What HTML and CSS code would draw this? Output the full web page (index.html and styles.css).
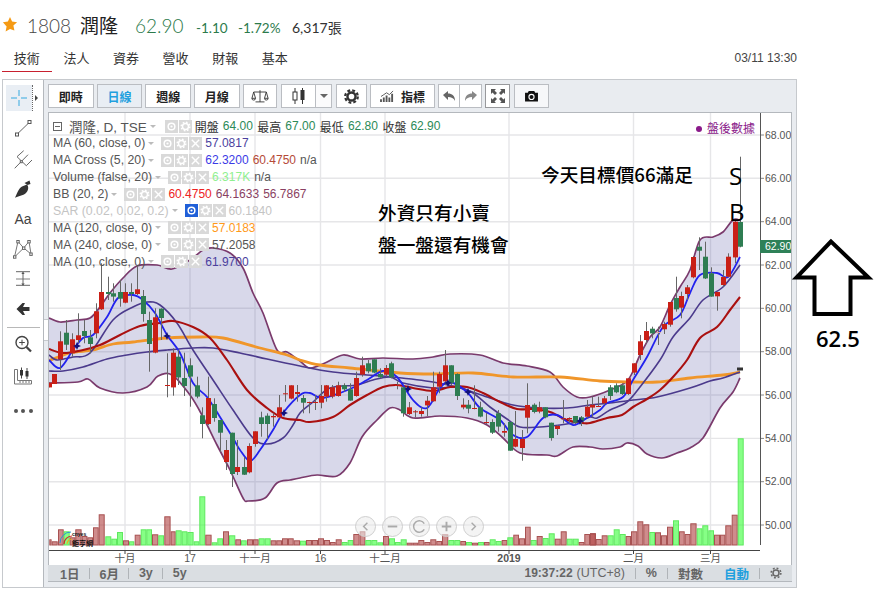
FILE: index.html
```html
<!DOCTYPE html>
<html lang="zh-Hant">
<head>
<meta charset="utf-8">
<title>1808 潤隆 技術線圖</title>
<link rel="stylesheet" href="styles.css">
</head>
<body>
<svg class="sprite" aria-hidden="true">
  <symbol id="i-eye" viewBox="0 0 14 14"><circle cx="7" cy="7" r="3.6" fill="none" stroke="#fff" stroke-width="1.6"/><circle cx="7" cy="7" r="1.2" fill="#fff"/></symbol>
  <symbol id="i-gear" viewBox="0 0 14 14"><circle cx="7" cy="7" r="3.2" fill="none" stroke="#fff" stroke-width="1.5"/><circle cx="7" cy="7" r="4.6" fill="none" stroke="#fff" stroke-width="1.6" stroke-dasharray="1.8 1.8"/></symbol>
  <symbol id="i-x" viewBox="0 0 14 14"><path d="M3 3l8 8M11 3l-8 8" stroke="#fff" stroke-width="1.5"/></symbol>
</svg>

<header class="quote">
  <svg class="star" viewBox="0 0 16 16"><path d="M8 1l2.1 4.6 5 .6-3.7 3.4 1 4.9L8 13.100 3.600 15.500l1-4.900L.9 6.200l5-.6z" fill="#f59a14"/></svg>
  <span class="code">1808</span>
  <span class="name">潤隆</span>
  <span class="price">62.90</span>
  <span class="chg">-1.10</span>
  <span class="chg chg-pct">-1.72%</span>
  <span class="vol">6,317張</span>
</header>

<nav class="tabs">
  <a class="tab tab-on">技術</a>
  <a class="tab">法人</a>
  <a class="tab">資券</a>
  <a class="tab">營收</a>
  <a class="tab">財報</a>
  <a class="tab">基本</a>
  <span class="stamp">03/11 13:30</span>
</nav>

<section class="frame">
  <aside class="tools">
    <div class="tool-top">
      <div class="cross"><svg viewBox="0 0 18 18" width="18" height="18"><path d="M9 1v6M9 11v6M1 9h6M11 9h6" stroke="#35a9e0" stroke-width="1"/></svg></div>
      <div class="cross-more"></div>
    </div>
    <div class="tool t-line"><svg viewBox="0 0 20 20" width="20" height="20"><path d="M4 15.300L16.700 3" stroke="#666"/><rect x="2.500" y="14" width="3" height="3" fill="#fff" stroke="#555"/><rect x="15" y="1.500" width="3" height="3" fill="#fff" stroke="#555"/></svg></div>
    <div class="tool"><svg viewBox="0 0 20 20" width="20" height="20" fill="none" stroke="#666"><path d="M1.700 19.300L15 5.700M4 7.700l9.300 9M4 7.700l6.700-6M13.300 16.700L19 11"/><rect x="7.300" y="11.700" width="2" height="2" fill="#fff"/></svg></div>
    <div class="tool"><svg viewBox="0 0 20 20" width="20" height="20"><path d="M2 18.700C4 15 5 10 9 7.500l5-2c2 2.500 1.500 6-1 8.500-3 3-8 3-11 4.700z" fill="#333"/><path d="M11.500 4l5-2.500 1 3.500-3 1z" fill="#333"/></svg></div>
    <div class="tool t-aa">Aa</div>
    <div class="tool"><svg viewBox="0 0 20 20" width="20" height="20" fill="none" stroke="#666"><path d="M1.500 18L5 2.500 10.700 9 16 2.500 18 15l-7.300-6L1.500 18" stroke-width=".9"/><rect x="3.800" y="1.500" width="2.400" height="2.400" fill="#fff"/><rect x="14.800" y="1.500" width="2.400" height="2.400" fill="#fff"/><rect x="9.500" y="8" width="2.400" height="2.400" fill="#fff"/><rect x=".5" y="16.800" width="2.400" height="2.400" fill="#fff"/><rect x="16.800" y="14" width="2.400" height="2.400" fill="#fff"/></svg></div>
    <div class="tool"><svg viewBox="0 0 20 20" width="20" height="20" fill="none"><path d="M3 2.700h14M3 16.300h14" stroke="#666"/><path d="M3 10h14" stroke="#aaa" stroke-width="1.500"/><path d="M10 3v13.500" stroke="#666"/><path d="M8.300 5l1.700-2 1.700 2zM8.300 14.500l1.700 2 1.700-2z" fill="#555"/></svg></div>
    <div class="tool"><svg viewBox="0 0 18 18" width="18" height="18"><path d="M2.500 9l6-6H11L9 7h6.500v4H9l2 4H8.500z" fill="#333"/></svg></div>
    <div class="tool-sep"></div>
    <div class="tool"><svg viewBox="0 0 20 20" width="20" height="20" fill="none" stroke="#444"><circle cx="9" cy="8.500" r="6" stroke-width="1.400"/><path d="M13.500 13l4.500 4.500" stroke-width="2.300"/><path d="M6.200 8.500h5.600M9 5.700v5.600"/></svg></div>
    <div class="tool t-ruler"><svg viewBox="0 0 20 20" width="20" height="20" fill="none"><path d="M1.500 3.500V18h17v-3.500H4.500V3.500z" stroke="#777"/><path d="M7 15v2M10 15v2M13 15v2M16 15v2" stroke="#777"/><path d="M8.500 1.500v11M14 2v11" stroke="#444"/><rect x="7" y="4" width="3" height="5.500" fill="#333"/><rect x="12.500" y="5" width="3" height="5.500" fill="#333"/></svg></div>
    <div class="tool t-dots"><i></i><i></i><i></i></div>
  </aside>

  <div class="workspace">
    <div class="toolbar">
      <button class="btn b-word">即時</button>
      <button class="btn b-word b-on">日線</button>
      <button class="btn b-word">週線</button>
      <button class="btn b-word">月線</button>
      <button class="btn b-scale"><svg viewBox="0 0 20 16" width="18" height="15" fill="none" stroke="#333"><path d="M10 1v13M5 14h10M3 3h14M3 3L1 10M3 3l2 7M17 3l-2 7M17 3l2 7M1 10a2 2 0 0 0 4 0zM15 10a2 2 0 0 0 4 0z"/></svg></button>
      <button class="btn b-candle"><svg viewBox="0 0 16 18" width="16" height="18"><path d="M4 1v16M11.500 1v16" stroke="#333"/><rect x="2" y="5" width="4" height="8" fill="#fff" stroke="#333"/><rect x="9.500" y="3" width="4" height="10" fill="#333"/></svg></button>
      <button class="btn b-caret"><i class="caret"></i></button>
      <button class="btn b-gear"><svg viewBox="0 0 16 16" width="15" height="15"><circle cx="8" cy="8" r="4.300" fill="none" stroke="#333" stroke-width="2.600"/><circle cx="8" cy="8" r="6.700" fill="none" stroke="#333" stroke-width="2.400" stroke-dasharray="3 2.260"/></svg></button>
      <button class="btn b-ind"><svg viewBox="0 0 16 14" width="15" height="13"><path d="M1 13v-3M4 13V8M7 13V6M10 13V8M13 13V4" stroke="#555" stroke-width="2"/><path d="M1 7l3-2 3-2 3 2 4-4" stroke="#555" fill="none"/></svg><span>指標</span></button>
      <div class="pair">
        <button class="btn b-undo"><svg viewBox="0 0 14 12" width="14" height="12"><path d="M1 5l5-4v2.500c4 0 7 2 7 7.500-1.500-3-3.500-4-7-4V10z" fill="#666"/></svg></button>
        <button class="btn b-undo b-redo"><svg viewBox="0 0 14 12" width="14" height="12"><path d="M13 5L8 1v2.500c-4 0-7 2-7 7.500 1.500-3 3.500-4 7-4V10z" fill="#888"/></svg></button>
      </div>
      <button class="btn b-full"><svg viewBox="0 0 16 16" width="16" height="16" fill="#555"><path d="M1 1h5L4.500 2.500 7 5 5 7 2.500 4.500 1 6zM15 1v5l-1.500-1.500L11 7 9 5l2.500-2.500L10 1zM1 15v-5l1.500 1.500L5 9l2 2-2.500 2.500L6 15zM15 15h-5l1.500-1.500L9 11l2-2 2.500 2.500L15 10z"/></svg></button>
      <button class="btn b-cam"><svg viewBox="0 0 16 13" width="15" height="12"><path d="M1 3h3l1-2h6l1 2h3v9.500H1z" fill="#111"/><circle cx="8" cy="7.500" r="2.800" fill="#111" stroke="#fff" stroke-width="1.200"/></svg></button>
    </div>

    <div class="chart">
      <svg id="plot" class="plot" viewBox="48 112 743 453" xmlns="http://www.w3.org/2000/svg">
        <g id="grid"></g>
        <g id="band"></g>
        <g id="vols"></g>
        <g id="lines"></g>
        <g id="candles"></g>
        <g id="axes"></g>
        <g class="logo">
          <path d="M60 543a11 11 0 0 1 11-11" fill="none" stroke="#2a9ad0" stroke-width="1"/>
          <path d="M64 544a8 8 0 0 1 8-8" fill="none" stroke="#d02a2a" stroke-width="1.200"/>
          <path d="M67 544a5 5 0 0 1 5-5" fill="none" stroke="#e8b020" stroke-width="1.200"/>
          <text class="logo-en" x="72" y="535.500">cnyes</text>
          <text class="logo-zh" x="72" y="546">鉅亨網</text>
        </g>
      </svg>

      <div class="legend">
        <div class="row row-main">
          <i class="fold"></i><span class="lbl">潤隆, D, TSE</span><i class="dd"></i>
          <span class="acts acts-two"><b class="act"><svg><use href="#i-eye"/></svg></b><b class="act"><svg><use href="#i-gear"/></svg></b></span>
          <span class="ohlc">開盤</span><span class="up">64.00</span><span class="ohlc">最高</span><span class="up">67.00</span><span class="ohlc">最低</span><span class="up">62.80</span><span class="ohlc">收盤</span><span class="up">62.90</span>
        </div>
        <div class="row"><span class="lbl">MA (60, close, 0)</span><i class="dd"></i><span class="acts"><b class="act"><svg><use href="#i-eye"/></svg></b><b class="act"><svg><use href="#i-gear"/></svg></b><b class="act"><svg><use href="#i-x"/></svg></b></span><span class="v c-ind">57.0817</span></div>
        <div class="row"><span class="lbl">MA Cross (5, 20)</span><i class="dd"></i><span class="acts"><b class="act"><svg><use href="#i-eye"/></svg></b><b class="act"><svg><use href="#i-gear"/></svg></b><b class="act"><svg><use href="#i-x"/></svg></b></span><span class="v c-blue">62.3200</span><span class="v c-brn">60.4750</span><span class="v c-na">n/a</span></div>
        <div class="row"><span class="lbl">Volume (false, 20)</span><i class="dd"></i><span class="acts"><b class="act"><svg><use href="#i-eye"/></svg></b><b class="act"><svg><use href="#i-gear"/></svg></b><b class="act"><svg><use href="#i-x"/></svg></b></span><span class="v c-lime">6.317K</span><span class="v c-na">n/a</span></div>
        <div class="row"><span class="lbl">BB (20, 2)</span><i class="dd"></i><span class="acts"><b class="act"><svg><use href="#i-eye"/></svg></b><b class="act"><svg><use href="#i-gear"/></svg></b><b class="act"><svg><use href="#i-x"/></svg></b></span><span class="v c-red">60.4750</span><span class="v c-bb">64.1633</span><span class="v c-bb">56.7867</span></div>
        <div class="row row-off"><span class="lbl">SAR (0.02, 0.02, 0.2)</span><i class="dd"></i><span class="acts"><b class="act act-on"><svg><use href="#i-eye"/></svg></b><b class="act"><svg><use href="#i-gear"/></svg></b><b class="act"><svg><use href="#i-x"/></svg></b></span><span class="v">60.1840</span></div>
        <div class="row"><span class="lbl">MA (120, close, 0)</span><i class="dd"></i><span class="acts"><b class="act"><svg><use href="#i-eye"/></svg></b><b class="act"><svg><use href="#i-gear"/></svg></b><b class="act"><svg><use href="#i-x"/></svg></b></span><span class="v c-org">57.0183</span></div>
        <div class="row"><span class="lbl">MA (240, close, 0)</span><i class="dd"></i><span class="acts"><b class="act"><svg><use href="#i-eye"/></svg></b><b class="act"><svg><use href="#i-gear"/></svg></b><b class="act"><svg><use href="#i-x"/></svg></b></span><span class="v c-na">57.2058</span></div>
        <div class="row"><span class="lbl">MA (10, close, 0)</span><i class="dd"></i><span class="acts"><b class="act"><svg><use href="#i-eye"/></svg></b><b class="act"><svg><use href="#i-gear"/></svg></b><b class="act"><svg><use href="#i-x"/></svg></b></span><span class="v c-ind">61.9700</span></div>
      </div>

      <div class="after"><i class="dot"></i>盤後數據</div>

      <div class="nav">
        <span class="nv"><svg viewBox="0 0 20 20"><path d="M12 6l-4 4 4 4" fill="none" stroke="#aaa" stroke-width="1.500"/></svg></span>
        <span class="nv"><svg viewBox="0 0 20 20"><path d="M5 10h10" stroke="#aaa" stroke-width="2"/></svg></span>
        <span class="nv"><svg viewBox="0 0 20 20"><path d="M15 7a6 6 0 1 0 0 6" fill="none" stroke="#aaa" stroke-width="1.500"/></svg></span>
        <span class="nv"><svg viewBox="0 0 20 20"><path d="M5 10h10M10 5v10" stroke="#aaa" stroke-width="2"/></svg></span>
        <span class="nv"><svg viewBox="0 0 20 20"><path d="M8 6l4 4-4 4" fill="none" stroke="#aaa" stroke-width="1.500"/></svg></span>
      </div>

      <div class="note note-a">今天目標價66滿足</div>
      <div class="note note-b">外資只有小賣</div>
      <div class="note note-c">盤一盤還有機會</div>
      <div class="mark mark-s">S</div>
      <div class="mark mark-b">B</div>
    </div>

    <footer class="range">
      <div class="range-l">
        <span>1日</span><i class="div"></i><span>6月</span><i class="div"></i><span>3y</span><i class="div"></i><span>5y</span>
      </div>
      <div class="range-r">
        <strong class="clock">19:37:22</strong><span class="tz">(UTC+8)</span><i class="div"></i><span>%</span><i class="div"></i><span>對數</span><span class="auto">自動</span><i class="div"></i>
        <svg class="cog" viewBox="0 0 16 16" width="12" height="12"><circle cx="8" cy="8" r="4" fill="none" stroke="#666" stroke-width="2"/><circle cx="8" cy="8" r="6.500" fill="none" stroke="#666" stroke-width="2" stroke-dasharray="2.500 2.600"/></svg>
      </div>
    </footer>
  </div>

  <svg class="big-arrow" viewBox="0 0 80 84"><path d="M37 3.500L2.500 39.500h18v36.500h36V39.500h18z" fill="#fff" stroke="#000" stroke-width="4"/></svg>
  <div class="target">62.5</div>
</section>
<script src="chart.js"></script>
</body>
</html>
```
FILE: styles.css
```css
* { box-sizing: border-box; }
html, body { margin: 0; padding: 0; background: #fff; }
body {
  width: 890px; height: 594px; overflow: hidden; position: relative;
  font-family: "Liberation Sans", "Noto Sans CJK TC", sans-serif;
  color: #333;
}
.sprite { position: absolute; width: 0; height: 0; }

/* quote line */
.quote { display: flex; align-items: baseline; height: 45px; padding: 14px 0 0 2px; }
.star { width: 16px; height: 16px; align-self: flex-start; margin: 2px 9px 0 0; }
.code { font: 300 19px Lato, "Liberation Sans", sans-serif; color: #444; width: 53px; }
.name { font: 400 19px "Noto Sans CJK TC", sans-serif; color: #222; width: 55px; line-height: 20px; }
.price { font: 300 19px Lato, "Liberation Sans", sans-serif; color: #2c7a4b; width: 61px; }
.chg { font: 400 13.500px Lato, "Liberation Sans", sans-serif; color: #2c7a4b; width: 42px; }
.chg-pct { width: 54px; }
.vol { font: 400 14px Lato, "Noto Sans CJK TC", sans-serif; color: #333; }

/* tabs */
.tabs { display: flex; align-items: flex-start; height: 27px; padding-left: 2px; position: relative; }
.tab { width: 49.600px; height: 27px; text-align: center; font-size: 13px; line-height: 27px; color: #333; }
.tab-on { border-bottom: 1px solid #c8202f; }
.stamp { margin-left: auto; margin-right: 93px; font-size: 12px; line-height: 27px; color: #444; }

/* frame */
.frame {
  position: absolute; left: 2px; top: 79px; width: 795px; height: 509px;
  display: flex; border: 1px solid #c6c9cd; background: #e9ecf0;
}
.tools { width: 41px; background: #fff; border-right: 1px solid #b4b8bd; display: flex; flex-direction: column; align-items: center; }
.tool-top { display: flex; width: 34px; height: 26px; margin: 5px 0 1px 0; background: #e9eef4; }
.cross { width: 26px; display: flex; align-items: center; justify-content: center; }
.cross-more { width: 8px; background: #fff; border-left: 1px dotted #666; position: relative; }
.cross-more::after { content: ""; position: absolute; left: 2px; top: 10px; border-left: 3px solid #444; border-top: 3px solid transparent; border-bottom: 3px solid transparent; }
.tool { width: 26px; height: 30px; display: flex; align-items: center; justify-content: center; }
.t-line { margin-top: 2px; }
.t-aa { font-size: 14px; color: #444; }
.tool-sep { width: 33px; height: 1px; background: #b8b8b8; margin: 3px 0 1px; }
.t-ruler { margin-top: 2px; }
.t-dots { gap: 3.500px; margin-top: 5px; }
.t-dots i { width: 4px; height: 4px; border-radius: 50%; background: #555; }

.workspace { width: 752px; padding-left: 4px; display: flex; flex-direction: column; position: relative; }
.workspace::before {
  content: ""; position: absolute; left: 0; top: 239px; width: 4px; height: 20px;
  background: #fff; border: 1px solid #c6c9cd; border-left: 0; border-right: 0;
}
.toolbar { height: 32px; display: flex; gap: 3px; padding: 4px 0 0 0; }
.btn {
  height: 24px; padding: 0; border: 1px solid #babdc2; background: #fff; color: #222;
  font: 700 12px "Noto Sans CJK TC", sans-serif; display: flex; align-items: center; justify-content: center;
}
.b-word { width: 45.670px; }
.b-on { background: #e9eef4; color: #1fa0de; }
.b-scale { width: 34.500px; }
.b-candle { width: 34px; border-right: 0; margin: 0 -3px 0 1px; }
.b-caret { width: 17px; background: #fbfbfc; }
.caret { border-top: 4px solid #666; border-left: 4px solid transparent; border-right: 4px solid transparent; }
.b-gear { width: 31px; margin-left: 1px; }
.b-ind { width: 65px; gap: 6px; }
.pair { display: flex; }
.b-undo { width: 22px; background: #fff; }
.b-redo { border-left: 0; }
.b-full { width: 25px; border-color: #98999c; }
.b-cam { width: 35px; background: #f6f7f9; margin-left: 1px; }

.chart {
  position: relative; width: 744px; height: 453px; background: #fff;
  border: 1px solid #b4b8bd; border-bottom: 0; overflow: hidden;
}
.plot { position: absolute; left: -1px; top: -1px; width: 743px; height: 453px; display: block; }
.gl { stroke: #e6e6e8; stroke-width: 1.400; }
.logo-en { font: 700 5px "Liberation Sans", sans-serif; fill: #111; }
.logo-zh { font: 700 7px "Noto Sans CJK TC", sans-serif; fill: #111; }
.ax-y { font: 10.500px "Liberation Sans", sans-serif; fill: #555; }
.ax-x { font: 10.500px "Liberation Sans", "Noto Sans CJK TC", sans-serif; fill: #555; text-anchor: middle; }
.ax-b { font-weight: 700; }
.tag { font: 10.500px "Liberation Sans", sans-serif; fill: #fff; }

.legend { position: absolute; left: 4px; top: 5px; font-size: 12px; }
.row { display: flex; align-items: center; height: 16.900px; white-space: nowrap; color: #555; }
.lbl { font-size: 12.300px; }
.row-main .lbl { font-size: 13.500px; margin-left: 7px; }
.fold { width: 9px; height: 9px; border: 1px solid #666; position: relative; }
.fold::after { content: ""; position: absolute; left: 1px; right: 1px; top: 3px; height: 1px; background: #666; }
.dd { width: 0; height: 0; margin-left: 3px; border-top: 3px solid #bbb; border-left: 3.500px solid transparent; border-right: 3.500px solid transparent; }
.acts { display: flex; gap: 1px; margin: 0 3px 0 7px; }
.acts-two { margin-left: 9px; }
.act { width: 13px; height: 13px; background: #d9d9d9; display: block; }
.act svg { width: 13px; height: 13px; display: block; }
.act-on { background: #1f5fd8; }
.ohlc { color: #333; margin-right: 4px; }
.up { color: #2c8a57; margin-right: 4.500px; }
.v { margin-right: 4px; }
.c-ind { color: #4b3f9e; }
.c-blue { color: #3b3be6; }
.c-brn { color: #b54a38; }
.c-na { color: #555; }
.c-lime { color: #8ff08f; }
.c-red { color: #ee2222; }
.c-bb { color: #8a3f62; }
.c-org { color: #ff9a1a; }
.row-off, .row-off .v { color: #c4c4c4; }

.after { position: absolute; right: 36px; top: 9px; font-size: 12px; line-height: 14px; color: #8a1a8a; display: flex; align-items: center; gap: 5px; }
.dot { width: 6px; height: 6px; border-radius: 50%; background: #8a1a8a; }

.nav { position: absolute; left: 306px; top: 403px; display: flex; gap: 6px; }
.nv { width: 21px; height: 21px; border-radius: 50%; border: 1px solid #cfcfcf; background: rgba(235, 235, 235, .55); display: block; }
.nv svg { display: block; width: 19px; height: 19px; }

.note { position: absolute; font: 500 18.670px/24px "Noto Sans CJK TC", sans-serif; color: #000; white-space: nowrap; }
.note-a { left: 492px; top: 49px; }
.note-b { left: 329px; top: 87px; }
.note-c { left: 329px; top: 119px; }
.mark { position: absolute; font: 400 24px/28px "Open Sans", sans-serif; color: #000; }
.mark-s { left: 680px; top: 49px; }
.mark-b { left: 680px; top: 85px; }

.range {
  width: 744px; height: 17px; background: #dadee2; border-bottom: 1px solid #b4b8bd;
  display: flex; justify-content: space-between; align-items: center; font-weight: 700; font-size: 12.500px; color: #666;
}
.range-l, .range-r { display: flex; align-items: center; gap: 10px; }
.range-l { padding-left: 12px; gap: 9.500px; }
.range-r { padding-right: 10px; }
.div { width: 1px; height: 11px; background: #b0b4b8; }
.clock { margin-right: -6px; font-size: 12px; }
.tz { font-weight: 400; }
.auto { color: #1fa0de; margin-left: 11px; }

.big-arrow { position: absolute; left: 791px; top: 158px; width: 80px; height: 84px; overflow: visible; }
.target { position: absolute; left: 813px; top: 246px; font: 600 22px/24px "Open Sans", sans-serif; color: #000; }
```
FILE: chart.js
```js
(function () {
  var NS = 'http://www.w3.org/2000/svg';
  function el(parent, name, attrs, text) {
    var n = document.createElementNS(NS, name);
    for (var k in attrs) n.setAttribute(k, attrs[k]);
    if (text) n.textContent = text;
    document.getElementById(parent).appendChild(n);
    return n;
  }
  function smooth(p, first) {
    var d = first ? 'M' + p[0][0] + ' ' + p[0][1] : 'L' + p[0][0] + ' ' + p[0][1];
    for (var i = 0; i < p.length - 1; i++) {
      var a = p[i - 1] || p[i], b = p[i], c = p[i + 1], e = p[i + 2] || c;
      d += 'C' + (b[0] + (c[0] - a[0]) / 6).toFixed(1) + ' ' + (b[1] + (c[1] - a[1]) / 6).toFixed(1) + ' ' +
        (c[0] - (e[0] - b[0]) / 6).toFixed(1) + ' ' + (c[1] - (e[1] - b[1]) / 6).toFixed(1) + ' ' + c[0] + ' ' + c[1];
    }
    return d;
  }

  /* grid */
  var hy = [135, 178.3, 221.7, 265, 308.3, 351.7, 395, 438.4, 481.7, 525];
  var vx = [125, 190, 255, 320.5, 385, 509, 633.5, 710.5];
  hy.forEach(function (y) { el('grid', 'line', { x1: 48, x2: 760, y1: y, y2: y, 'class': 'gl' }); });
  vx.forEach(function (x) { el('grid', 'line', { x1: x, x2: x, y1: 112, y2: 550, 'class': 'gl' }); });

  /* Bollinger band */
  var up = [[49,318],[60,322],[77,320],[90,318],[100,307],[110,293],[123,278],[137,266],[157,265],[172,269],[190,260],[203,250],[213,248],[230,253],[243,268],[253,293],[263,313],[277,350],[287,352],[300,361],[310,368],[325,363],[343,355],[360,359],[383,358],[413,359],[433,357],[450,354],[480,355],[503,363],[527,366],[550,372],[563,387],[577,397],[590,397],[610,390],[628,380],[640,355],[650,337],[660,327],[670,305],[680,287],[690,270],[700,240],[713,237],[723,232],[733,220],[740,220]];
  var lo = [[49,383],[78,382],[88,379],[100,388],[123,393],[147,387],[158,376],[172,375],[190,395],[203,417],[217,445],[230,470],[243,498],[248,501],[265,498],[277,483],[290,480],[300,478],[317,475],[337,476],[350,463],[362,437],[377,420],[390,408],[400,410],[413,418],[440,416],[467,418],[487,425],[503,438],[520,453],[547,455],[557,456],[573,447],[590,447],[603,449],[620,447],[627,443],[638,446],[647,454],[662,458],[677,453],[690,448],[703,438],[720,408],[733,392],[740,378]];
  var band = smooth(up, true) + smooth(lo.slice().reverse(), false) + 'Z';
  el('band', 'path', { d: band, fill: 'rgba(88,88,165,.23)' });

  /* volume: [left, right, top] in 3x crop coordinates */
  var V = [
    { ox: 0, oy: 430, base: 345, b: [[148,155,328,'r'],[155,173,334,'r'],[174,191,298,'r'],[191,209,304,'g'],[209,226,322,'r'],[226,245,298,'r'],[245,262,318,'r'],[262,279,322,'r'],[279,296,292,'r'],[296,314,253,'r'],[316,334,319,'g'],[334,351,326,'g'],[351,369,306,'g'],[369,387,331,'r'],[387,403,334,'g'],[404,422,314,'r'],[422,439,298,'g'],[439,456,298,'g'],[456,475,313,'r'],[475,492,316,'g'],[493,512,259,'r'],[512,527,304,'r'],[527,545,301,'g'],[545,562,304,'g'],[562,581,306,'g'],[581,598,334,'g'],[598,616,199,'g'],[616,635,314,'r'],[635,652,337,'g'],[652,669,325,'g'],[669,687,304,'r'],[687,706,316,'g'],[706,723,328,'r'],[723,740,331,'g'],[741,759,328,'r'],[759,776,328,'r'],[776,794,325,'g'],[794,812,325,'g'],[812,829,331,'r'],[829,846,331,'r'],[846,864,325,'r'],[864,881,325,'r'],[881,900,331,'r']] },
    { ox: 300, oy: 330, base: 645, b: [[0,18,632,'g'],[18,36,630,'r'],[36,54,630,'r'],[54,72,625,'r'],[72,90,630,'r'],[90,107,636,'r'],[107,125,628,'r'],[125,143,636,'g'],[143,160,630,'g'],[160,179,612,'r'],[179,196,604,'r'],[196,214,630,'g'],[214,232,630,'g'],[232,249,637,'g'],[249,267,618,'r'],[267,285,625,'g'],[285,302,636,'g'],[302,320,628,'g'],[320,338,638,'r'],[338,355,638,'r'],[355,373,630,'r'],[373,391,636,'r'],[391,409,628,'r'],[409,426,633,'r'],[426,445,613,'r'],[445,463,630,'g'],[463,481,630,'g'],[481,498,633,'r'],[498,516,636,'g'],[516,534,638,'r'],[534,552,636,'g'],[552,569,636,'r'],[569,587,628,'g'],[587,605,633,'g'],[605,622,630,'r'],[622,640,622,'g'],[640,657,614,'r'],[657,675,625,'r'],[675,692,590,'r'],[692,710,630,'g'],[710,728,618,'r'],[728,746,624,'g'],[746,764,610,'g'],[764,782,626,'r'],[782,800,604,'r'],[800,818,626,'g'],[818,836,626,'g'],[836,853,636,'r'],[853,870,612,'r'],[870,888,610,'r']] },
    { ox: 590, oy: 350, base: 585, b: [[0,17,550,'r'],[17,35,567,'r'],[35,53,556,'r'],[53,71,556,'g'],[71,89,538,'g'],[89,107,552,'g'],[107,123,558,'r'],[123,142,544,'r'],[142,160,514,'r'],[160,178,523,'r'],[178,195,546,'g'],[195,213,547,'r'],[213,231,556,'r'],[231,249,530,'r'],[249,267,511,'g'],[267,284,544,'r'],[284,301,552,'r'],[301,320,520,'r'],[320,337,535,'g'],[337,355,526,'g'],[355,372,541,'g'],[372,390,554,'r'],[390,406,554,'r'],[406,425,526,'r'],[425,443,494,'r'],[443,461,265,'g']] }
  ];
  V.forEach(function (s) {
    s.b.forEach(function (b) {
      var r = b[3] === 'r';
      el('vols', 'rect', {
        x: (s.ox + b[0] / 3 + .5).toFixed(1), y: (s.oy + b[2] / 3 + .5).toFixed(1),
        width: ((b[1] - b[0]) / 3 - 1).toFixed(1), height: ((s.base - b[2]) / 3 - .5).toFixed(1),
        fill: r ? 'rgba(178,70,70,.62)' : 'rgba(60,255,60,.62)', stroke: r ? '#a85252' : '#5fe85f', 'stroke-width': 1
      });
    });
  });

  /* moving averages */
  var L = [
    { c: '#f0962a', w: 2.8, p: [[48,361],[70,353],[93,350],[113,344],[133,342],[167,338],[200,337],[223,338],[260,348],[287,355],[300,360],[320,365],[350,368],[400,373],[433,374],[473,373],[513,377],[560,377],[600,381],[633,382],[657,382],[690,378],[723,375],[740,372]] },
    { c: '#4b3a8c', w: 1.6, p: [[49,371],[63,371],[83,367],[107,359],[127,355],[147,352],[167,350],[193,348],[213,348],[240,353],[267,359],[300,366],[333,372],[367,375],[393,377],[433,382],[460,388],[490,398],[513,405],[540,408],[567,408],[590,405],[610,403],[633,400],[657,397],[690,388],[710,381],[723,378],[740,372]] },
    { c: '#4b3a8c', w: 1.6, p: [[49,355],[57,360],[73,357],[90,353],[113,320],[133,307],[147,302],[160,305],[177,323],[193,350],[213,380],[233,410],[253,438],[267,444],[283,438],[293,425],[300,413],[313,402],[330,388],[357,385],[373,380],[390,377],[403,383],[433,388],[457,387],[473,393],[490,407],[507,419],[520,427],[540,427],[560,425],[577,422],[590,417],[597,418],[610,410],[627,402],[640,387],[660,360],[673,337],[690,318],[703,300],[723,287],[740,265]] },
    { c: '#aa1010', w: 2.1, p: [[49,349],[63,353],[83,350],[100,345],[120,335],[140,326],[160,323],[173,321],[193,327],[210,338],[227,360],[247,390],[267,408],[283,418],[300,420],[310,422],[333,417],[350,405],[367,395],[383,387],[397,385],[413,388],[433,391],[450,387],[467,387],[483,393],[500,402],[517,409],[533,409],[550,412],[567,420],[583,423],[590,423],[607,418],[622,415],[633,407],[647,399],[660,390],[673,377],[687,360],[700,338],[717,327],[730,310],[740,297]] },
    { c: '#2222ee', w: 1.8, p: [[49,360],[60,368],[73,350],[83,338],[93,335],[107,317],[118,298],[133,295],[143,300],[155,313],[167,335],[180,353],[193,383],[207,397],[220,417],[233,438],[240,450],[250,461],[260,450],[273,430],[283,413],[300,395],[310,393],[323,398],[350,389],[367,380],[383,371],[397,377],[413,400],[427,408],[440,388],[450,382],[467,392],[480,408],[500,420],[513,435],[527,437],[543,418],[557,415],[573,425],[587,418],[600,410],[607,403],[623,397],[633,380],[647,357],[663,327],[680,315],[690,293],[700,275],[717,273],[728,277],[740,257]] }
  ];
  el('lines', 'path', { d: smooth(up, true), fill: 'none', stroke: '#7a3a6c', 'stroke-width': 1.7 });
  el('lines', 'path', { d: smooth(lo, true), fill: 'none', stroke: '#7a3a6c', 'stroke-width': 1.7 });
  L.forEach(function (l) {
    el('lines', 'path', { d: smooth(l.p, true), fill: 'none', stroke: l.c, 'stroke-width': l.w });
  });

  /* candles: [x, wickTop, wickBottom, bodyTop, bodyBottom, colour] in crop coordinates */
  var C = [
    { ox: 0, oy: 270, c: [[148,338,352,338,352,'r'],[162,312,342,312,342,'r'],[181,184,300,214,268,'r'],[198,150,240,188,224,'g'],[216,190,260,208,250,'r'],[234,130,220,196,210,'r'],[252,150,220,183,198,'g'],[270,180,250,202,222,'g'],[288,100,205,124,190,'r'],[304,-20,120,66,118,'r'],[323,20,90,66,72,'g'],[340,40,95,70,80,'g'],[359,30,110,66,86,'g'],[376,40,100,66,98,'r'],[393,40,95,66,72,'g'],[411,-15,75,58,72,'r'],[429,60,155,78,132,'g'],[446,125,305,150,222,'g'],[465,115,250,142,248,'r'],[482,115,210,116,144,'g'],[501,250,382,345,347,'r'],[518,235,377,248,352,'r'],[535,240,345,260,322,'g'],[553,248,378,324,348,'g'],[570,265,410,286,320,'g'],[590,320,385,346,380,'g'],[606,412,505,436,462,'g'],[624,320,465,384,462,'r'],[642,385,455,402,444,'g'],[660,450,546,450,488,'g'],[677,510,600,540,576,'r'],[695,488,651,488,612,'g'],[712,510,615,591,606,'r'],[731,561,615,591,614,'g'],[748,520,610,528,607,'r'],[765,484,530,484,522,'r'],[784,425,500,442,462,'g'],[801,430,508,437,462,'g'],[818,430,470,438,442,'r'],[836,375,445,412,442,'r'],[854,345,395,370,372,'r'],[873,346,388,346,386,'r'],[890,345,395,366,372,'r']] },
    { ox: 300, oy: 330, c: [[8,195,250,204,218,'g'],[26,215,250,216,218,'r'],[44,195,240,216,218,'r'],[63,165,235,198,218,'r'],[79,165,215,166,200,'r'],[96,165,205,172,200,'r'],[115,155,200,166,198,'r'],[132,160,185,166,178,'g'],[151,160,212,178,212,'g'],[168,125,200,144,198,'r'],[185,80,140,106,134,'r'],[204,90,130,100,124,'g'],[221,88,130,88,128,'g'],[239,115,145,132,142,'g'],[257,105,140,114,134,'r'],[274,95,145,100,142,'g'],[292,155,178,165,167,'r'],[310,170,260,172,250,'g'],[327,216,255,232,252,'r'],[345,240,262,244,246,'r'],[363,232,260,243,252,'r'],[381,198,258,212,226,'r'],[399,125,215,172,214,'r'],[416,125,190,132,170,'r'],[435,60,165,106,154,'r'],[452,106,165,106,160,'g'],[470,130,210,132,198,'g'],[488,205,238,224,232,'r'],[504,210,250,224,236,'g'],[523,166,238,234,236,'r'],[540,215,262,232,260,'g'],[558,248,282,276,278,'r'],[576,268,312,276,308,'g'],[594,240,305,250,290,'g'],[612,280,320,303,308,'r'],[630,276,362,276,362,'g'],[646,243,352,327,350,'r'],[665,300,392,327,354,'r'],[682,160,310,225,263,'r'],[701,220,250,224,246,'g'],[718,215,250,232,245,'r'],[735,232,265,232,262,'g'],[754,278,332,278,324,'g'],[771,285,315,288,297,'r'],[790,210,280,265,268,'r'],[807,262,280,264,268,'r'],[824,258,282,258,278,'g'],[842,258,288,262,274,'g'],[860,210,265,230,260,'r'],[877,200,260,224,232,'r']] },
    { ox: 590, oy: 350, c: [[5,140,172,165,172,'r'],[24,140,170,168,170,'r'],[42,138,165,145,160,'r'],[61,105,150,112,138,'g'],[78,100,130,106,127,'g'],[96,100,135,106,132,'g'],[114,85,135,85,132,'r'],[132,40,75,40,68,'r']] },
    { ox: 590, oy: 130, c: [[150,615,690,634,675,'r'],[168,576,640,603,630,'r'],[185,590,625,596,610,'g'],[203,590,645,606,609,'p'],[221,575,612,582,598,'r'],[239,516,590,516,584,'r'],[257,440,545,504,538,'g'],[274,485,565,498,533,'r'],[292,465,510,472,492,'r'],[309,378,445,381,442,'r'],[327,322,420,350,362,'g'],[345,335,447,380,445,'g'],[362,412,500,430,500,'g'],[381,486,542,486,499,'r'],[398,420,470,441,465,'r'],[414,370,442,380,440,'r'],[434,270,400,275,382,'r'],[451,80,352,276,350,'g']] }
  ];
  var col = { r: '#c91f16', g: '#2e7d52', p: '#d9a0a0' };
  C.forEach(function (s) {
    s.c.forEach(function (k) {
      var x = Math.round(s.ox + k[0] / 3) + .5;
      el('candles', 'line', { x1: x, x2: x, y1: (s.oy + k[1] / 3).toFixed(1), y2: (s.oy + k[2] / 3).toFixed(1), stroke: '#666', 'stroke-width': 1 });
      el('candles', 'rect', { x: x - 2.5, y: (s.oy + k[3] / 3).toFixed(1), width: 5, height: Math.max(1, (k[4] - k[3]) / 3).toFixed(1), fill: col[k[5]] });
    });
  });

  /* cross markers */
  [[77,346],[167,336],[284,413],[408,389],[448,383],[468,392],[580,421]].forEach(function (m) {
    el('candles', 'path', { d: 'M' + m[0] + ' ' + (m[1] - 4) + 'l1.2 2.800 2.800 1.200-2.800 1.200-1.200 2.800-1.200-2.800-2.800-1.200 2.800-1.200z', fill: '#12127a' });
  });
  el('candles', 'rect', { x: 737, y: 367.5, width: 6, height: 3, fill: '#333' });

  /* axes */
  el('axes', 'line', { x1: 760.5, x2: 760.5, y1: 112, y2: 545, stroke: '#555', 'stroke-width': 1 });
  el('axes', 'line', { x1: 48, x2: 760, y1: 550.5, y2: 550.5, stroke: '#444', 'stroke-width': 1 });
  ['68.00','66.00','64.00','62.00','60.00','58.00','56.00','54.00','52.00','50.00'].forEach(function (t, i) {
    el('axes', 'line', { x1: 761, x2: 764, y1: hy[i], y2: hy[i], stroke: '#888' });
    el('axes', 'text', { x: 765, y: hy[i] + 3.5, 'class': 'ax-y' }, t);
  });
  var xl = [[125,'十月'],[190,'17'],[255,'十一月'],[320.5,'16'],[385,'十二月'],[509,'2019'],[633.5,'二月'],[710.5,'三月']];
  xl.forEach(function (l) {
    el('axes', 'line', { x1: l[0], x2: l[0], y1: 551, y2: 554, stroke: '#444' });
    el('axes', 'text', { x: l[0], y: 562, 'class': l[1] === '2019' ? 'ax-x ax-b' : 'ax-x' }, l[1]);
  });
  el('axes', 'rect', { x: 760, y: 240, width: 31, height: 13, fill: '#2e8158' });
  el('axes', 'text', { x: 765, y: 250, 'class': 'tag' }, '62.90');
})();
```
